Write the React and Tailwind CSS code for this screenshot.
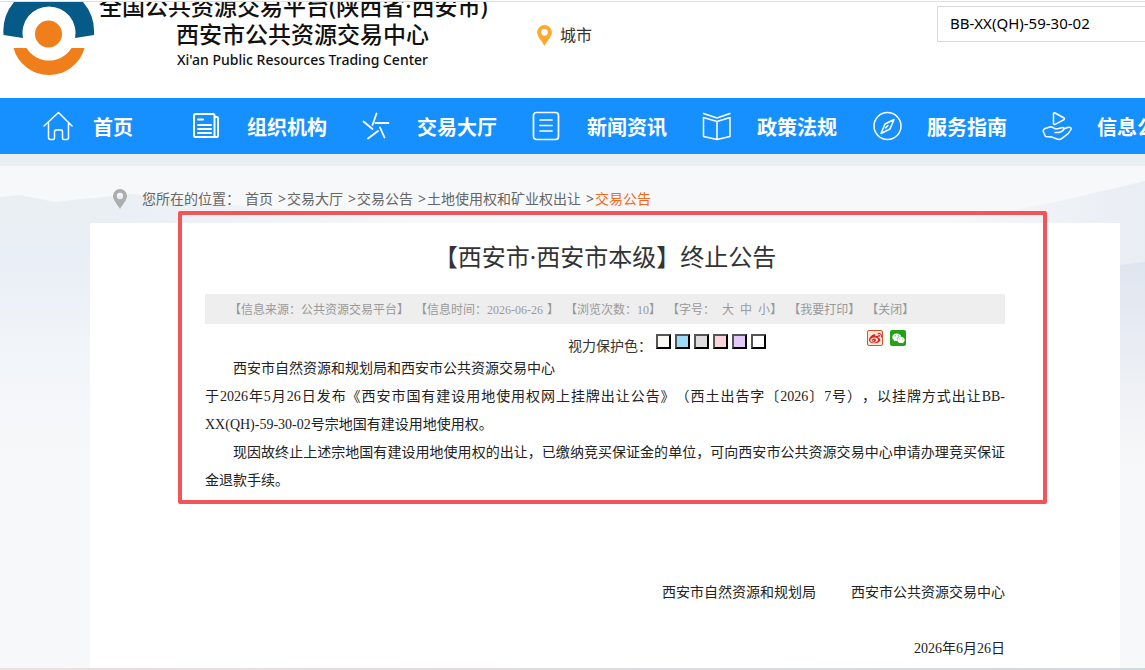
import { FaWeibo, FaWeixin } from 'react-icons/fa6'

const iconProps = {
  viewBox: '0 0 30 30',
  fill: 'none',
  stroke: 'currentColor',
  strokeLinecap: 'round',
  strokeLinejoin: 'round',
  className: 'h-[30px] w-[30px]',
}

const HomeIcon = () => (
  <svg {...iconProps} strokeWidth="1.5">
    <path d="M1 15 15.500 1.500 29 15M5.500 12v14.500a2 2 0 0 0 2 2h2.500a1.500 1.500 0 0 0 1.500-1.500v-6.500a1.500 1.500 0 0 1 1.500-1.500h5a1.500 1.500 0 0 1 1.500 1.500v6.500a1.500 1.500 0 0 0 1.500 1.500h2.500a2 2 0 0 0 2-2V12" />
  </svg>
)

const NewspaperIcon = () => (
  <svg {...iconProps} strokeWidth="2">
    <path d="M3.500 3h17.500a1.500 1.500 0 0 1 1.500 1.500V26H3.500A1.500 1.500 0 0 1 2 24.500v-20A1.500 1.500 0 0 1 3.500 3zM22.500 6H25a1 1 0 0 1 1 1v18a1 1 0 0 1-1 1h-2.500M6 8.500h5M6 14h13M6 18h13M6 22h13" />
  </svg>
)

const PinwheelIcon = () => (
  <svg {...iconProps} strokeWidth="1.800">
    <path d="M14.500 2.500 10.500 14M1.500 10.500 10.500 18M13.500 12h13M18 16.500l4.500 10M16 20 6 27.500" />
  </svg>
)

const ListIcon = () => (
  <svg {...iconProps} strokeWidth="1.700">
    <rect x="1.500" y="1.500" width="25" height="27" rx="3" />
    <path d="M8 9h12M8 14.500h12M8 20h12" />
  </svg>
)

const BookIcon = () => (
  <svg {...iconProps} strokeWidth="1.500">
    <path d="M1.500 2.500 15 7l13-4.500M15 10.500 1.500 6.500v19L15 28.500l13-3v-19L15 10.500zM15 10.500v18" />
  </svg>
)

const CompassIcon = () => (
  <svg {...iconProps} strokeWidth="1.500">
    <circle cx="15.500" cy="15" r="13.500" />
    <path d="M22 8.500 18 18l-9 4.500 4-9.500 9-4.500zM13.500 17l2.500-2.500" />
  </svg>
)

const HandIcon = () => (
  <svg {...iconProps} strokeWidth="1.500">
    <path d="M11.500 3v9.500a1 1 0 0 0 1.600.8l9-4.700a1 1 0 0 0 0-1.600l-9-5a1 1 0 0 0-1.600 1z" />
    <path d="M13 21.500h4c3-.5 5.500-3 5-4.500-.8-1.600-4 .8-8.500.8-1.800-.4-2.800-2-4.800-2L3 17.500c-2 .8-2 2-1.500 3.500L3.500 25.500l6 .5c3 .6 5 2.600 8 2.600 2.500-.6 4-2.600 5.500-3.600 3-1.500 5-4.500 6-6.500.5-2-1-2.500-2.500-2.200L21.500 18" />
  </svg>
)

const PinIcon = ({ className }) => (
  <svg viewBox="0 0 14 20" fill="currentColor" className={className}>
    <path
      fillRule="evenodd"
      d="M7 0a7 7 0 0 1 7 7c0 4-4.500 8.500-7 13C4.500 15.500 0 11 0 7a7 7 0 0 1 7-7zm0 3.800a3.200 3.200 0 1 0 0 6.400 3.200 3.200 0 0 0 0-6.400z"
    />
  </svg>
)

const Logo = () => (
  <svg viewBox="0 0 92 74" className="h-[74px] w-[92px] shrink-0">
    <path d="M0.500 33A45.600 45.600 0 0 1 11 0h69A45.600 45.600 0 0 1 91 33L72 36a26.500 26.500 0 1 0-52 0z" fill="#065a87" />
    <path d="M10.500 46h13a26.500 26.500 0 0 0 45 0h13a36.800 36.800 0 0 1-71 0z" fill="#f07e1b" />
    <circle cx="45.500" cy="32" r="13.500" fill="#f07e1b" />
  </svg>
)

const navItems = [
  { label: '组织机构', icon: NewspaperIcon },
  { label: '交易大厅', icon: PinwheelIcon },
  { label: '新闻资讯', icon: ListIcon },
  { label: '政策法规', icon: BookIcon },
  { label: '服务指南', icon: CompassIcon },
  { label: '信息公开', icon: HandIcon },
]

const crumbs = ['首页', '交易大厅', '交易公告', '土地使用权和矿业权出让']

const eyeColors = [
  { name: '米白', bg: 'bg-[#faf8f5]' },
  { name: '天蓝', bg: 'bg-[#9cdcf8]' },
  { name: '浅灰', bg: 'bg-[#dddddd]' },
  { name: '粉红', bg: 'bg-[#fbd3da]' },
  { name: '淡紫', bg: 'bg-[#e3c9f8]' },
  { name: '白色', bg: 'bg-white' },
]

function Header() {
  return (
    <header className="mt-px flex h-[97px] items-start overflow-hidden border-t border-[#dedede] bg-white">
      <a href="#" className="flex w-[535px] shrink-0 items-start pl-[3px]">
        <Logo />
        <div className="-mt-2.5 flex flex-1 flex-col pl-[4px] font-medium text-[#111]">
          <span className="text-[23px] leading-7 whitespace-nowrap">全国公共资源交易平台(陕西省·西安市)</span>
          <span className="pl-[77px] text-[23px] leading-7 whitespace-nowrap">西安市公共资源交易中心</span>
          <span className="pl-[78px] text-sm leading-6 whitespace-nowrap">Xi'an Public Resources Trading Center</span>
        </div>
      </a>
      <button className="mt-[21px] flex items-center gap-2 pl-[2px] text-base text-[#333]">
        <PinIcon className="h-[21px] w-[15px] text-[#fba92f]" />
        城市
      </button>
      <input
        type="text"
        aria-label="搜索"
        defaultValue="BB-XX(QH)-59-30-02"
        className="mt-1 -mr-10 ml-auto h-9 w-[248px] shrink-0 border border-[#d9d9d9] px-3 pb-0.5 text-[15px] text-black outline-none"
      />
    </header>
  )
}

function Nav() {
  return (
    <nav className="flex h-14 items-center overflow-hidden bg-[#1690ff] pl-[43px] text-xl font-bold text-white">
      <a href="#" className="flex w-[149px] shrink-0 items-center gap-5">
        <HomeIcon />
        <span className="pt-1">首页</span>
      </a>
      {navItems.map(({ label, icon: Icon }) => (
        <a key={label} href="#" className="flex w-[170px] shrink-0 items-center gap-[25px] whitespace-nowrap">
          <Icon />
          <span className="pt-1">{label}</span>
        </a>
      ))}
    </nav>
  )
}

// 远山背景
function Mountains() {
  return (
    <svg viewBox="0 0 1145 300" preserveAspectRatio="none" className="absolute top-0 left-0 h-[300px] w-full">
      <defs>
        <linearGradient id="ridge" x1="0" y1="0" x2="0" y2="1">
          <stop offset="0" stopColor="#eaeff3" />
          <stop offset="0.2" stopColor="#e8eef5" />
          <stop offset="0.6" stopColor="#f2f5f9" />
          <stop offset="1" stopColor="#f7f8f9" />
        </linearGradient>
        <linearGradient id="far" x1="0" y1="0" x2="1" y2="0">
          <stop offset="0" stopColor="#e8eef5" />
          <stop offset="1" stopColor="#f7f8f9" />
        </linearGradient>
        <linearGradient id="right" x1="0" y1="0" x2="1" y2="0">
          <stop offset="0" stopColor="#f7f8f9" />
          <stop offset="1" stopColor="#e9edf4" />
        </linearGradient>
        <linearGradient id="fade" x1="0" y1="0" x2="0" y2="1">
          <stop offset="0" stopColor="#dfe5ef" />
          <stop offset="1" stopColor="#f7f8f9" />
        </linearGradient>
      </defs>
      <path d="M60 36 130 28 200 36 330 48 460 58H60z" fill="url(#far)" />
      <path d="M0 31 20 29 55 36 90 32 120 32V300H0z" fill="url(#ridge)" />
      <path d="M930 57 1000 47 1060 35 1145 15V100H1120V57z" fill="url(#right)" />
      <path d="M1110 100 1145 96V300H1110z" fill="url(#fade)" />
    </svg>
  )
}

function Breadcrumb() {
  return (
    <div className="flex h-[57px] items-center pt-2 pl-[23px] text-sm whitespace-nowrap text-[#666]">
      <PinIcon className="mr-[15px] h-5 w-3.5 text-[#adadad]" />
      <span className="w-[103px]">您所在的位置：</span>
      {crumbs.map((c) => (
        <span key={c} className="flex">
          <a href="#">{c}</a>
          <span className="w-3.5 pl-[5px]">&gt;</span>
        </span>
      ))}
      <a href="#" className="text-[#f5691c]">交易公告</a>
    </div>
  )
}

function InfoBar() {
  return (
    <div className="flex h-[30px] items-center gap-1.5 bg-[#eeeeee] pt-px pl-6 text-xs whitespace-nowrap text-[#999] font-['Liberation_Serif','Noto_Sans_CJK_SC',sans-serif]">
      <span>【信息来源：公共资源交易平台】</span>
      <span>【信息时间：<span className="inline-block w-[60px]">2026-06-26</span>】</span>
      <span>【浏览次数：10】</span>
      <span className="flex">
        【字号：
        <span className="flex gap-1.5 pl-[7px]">
          <button>大</button>
          <button>中</button>
          <button>小</button>
        </span>
        】
      </span>
      <span>【<button>我要打印</button>】</span>
      <span>【<button>关闭</button>】</span>
    </div>
  )
}

function Tools() {
  return (
    <div className="flex h-[31px] items-start pl-[363px]">
      <span className="w-[88px] pt-3 text-sm leading-5 whitespace-nowrap text-[#333]">视力保护色：</span>
      <div className="flex gap-1 pt-2.5">
        {eyeColors.map((c) => (
          <button
            key={c.name}
            aria-label={c.name}
            className={`h-[15px] w-[15px] border-2 border-t-[#555] border-r-black border-b-black border-l-[#555] ${c.bg}`}
          />
        ))}
      </div>
      <div className="ml-auto flex gap-[7px] pt-1.5 pr-[99px]">
        <button aria-label="分享到微博" className="flex h-4 w-4 items-center justify-center rounded-xs border border-[#d9502e] bg-[#fdebd3] text-[#d8222a]">
          <FaWeibo size={13} />
        </button>
        <button aria-label="分享到微信" className="flex h-4 w-4 items-center justify-center rounded-xs bg-[#23a216] text-white">
          <FaWeixin size={13} />
        </button>
      </div>
    </div>
  )
}

function Article() {
  return (
    <article className="relative bg-white px-[115px] pt-4 pb-[5px]">
      <h1 className="h-[55px] text-center text-2xl leading-9 text-[#333]">【西安市·西安市本级】终止公告</h1>
      <InfoBar />
      <Tools />
      <div className="text-justify text-sm leading-7 text-[#222] font-['Liberation_Serif','Noto_Sans_CJK_SC',sans-serif]">
        <p className="indent-7">西安市自然资源和规划局和西安市公共资源交易中心</p>
        <p>
          于2026年5月26日发布《西安市国有建设用地使用权网上挂牌出让公告》（西土出告字〔2026〕7号），以挂牌方式出让BB-XX(QH)-59-30-02号宗地国有建设用地使用权。
        </p>
        <p className="indent-7">
          现因故终止上述宗地国有建设用地使用权的出让，已缴纳竞买保证金的单位，可向西安市公共资源交易中心申请办理竞买保证金退款手续。
        </p>
        <div className="flex justify-end gap-[35px] pt-21">
          <span>西安市自然资源和规划局</span>
          <span>西安市公共资源交易中心</span>
        </div>
        <p className="pt-7 text-right">2026年6月26日</p>
      </div>

      {/* 红色标注框 */}
      <div className="pointer-events-none absolute -top-3 right-[73px] left-[88px] h-[293px] rounded-xs border-4 border-[#f25557]" />
    </article>
  )
}

export default function App() {
  return (
    <div lang="zh-CN" className="overflow-hidden bg-white [text-spacing-trim:space-all] font-['Noto_Sans','Noto_Sans_CJK_SC',sans-serif]">
      <Header />
      <Nav />
      <div className="h-3 bg-[#e9eef2]" />
      <main className="relative bg-[#f7f8f9] pr-[25px] pl-[90px]">
        <Mountains />
        <div className="relative">
          <Breadcrumb />
          <Article />
        </div>
      </main>
      <footer className="h-0.5 bg-linear-to-r from-[#ecdfe0] to-[#d0d9de]" />
    </div>
  )
}
